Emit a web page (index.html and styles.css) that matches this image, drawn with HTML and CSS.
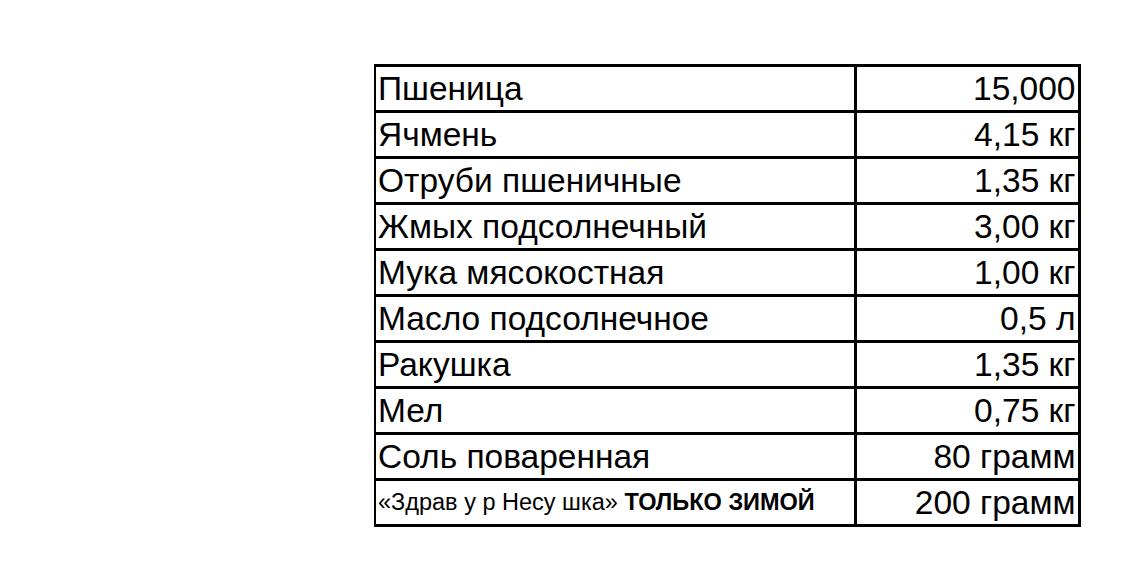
FILE: index.html
```html
<!DOCTYPE html>
<html lang="ru">
<head>
<meta charset="utf-8">
<link rel="stylesheet" href="styles.css">
</head>
<body>
<div class="page">
<table class="feed">
<tr><td class="name">Пшеница</td><td class="qty">15,000</td></tr>
<tr><td class="name">Ячмень</td><td class="qty">4,15 кг</td></tr>
<tr><td class="name">Отруби пшеничные</td><td class="qty">1,35 кг</td></tr>
<tr><td class="name">Жмых подсолнечный</td><td class="qty">3,00 кг</td></tr>
<tr><td class="name">Мука мясокостная</td><td class="qty">1,00 кг</td></tr>
<tr><td class="name">Масло подсолнечное</td><td class="qty">0,5 л</td></tr>
<tr><td class="name">Ракушка</td><td class="qty">1,35 кг</td></tr>
<tr><td class="name">Мел</td><td class="qty">0,75 кг</td></tr>
<tr><td class="name">Соль поваренная</td><td class="qty">80 грамм</td></tr>
<tr><td class="name small">«Здрав у р Несу шка» <b>ТОЛЬКО ЗИМОЙ</b></td><td class="qty">200 грамм</td></tr>
</table>
</div>
</body>
</html>
```
FILE: styles.css
```css
html, body {
  margin: 0;
  padding: 0;
  background: #fff;
}
.page {
  width: 1140px;
  height: 580px;
  padding: 64px 0 0 374px;
  box-sizing: border-box;
}
.feed {
  border-collapse: collapse;
  font-family: "Liberation Sans", Arial, sans-serif;
  color: #000;
}
.feed td {
  border: 3px solid #000;
  height: 46px;
  padding: 0 2px 0 2px;
  font-size: 33.5px;
  line-height: 1;
  box-sizing: border-box;
  white-space: nowrap;
}
.feed td.name {
  width: 480px;
  border-left-width: 2px;
  text-align: left;
}
.feed td.qty {
  width: 224px;
  text-align: right;
}
.feed td.small {
  font-size: 23.5px;
}
.feed td.small b {
  font-weight: bold;
}
```
